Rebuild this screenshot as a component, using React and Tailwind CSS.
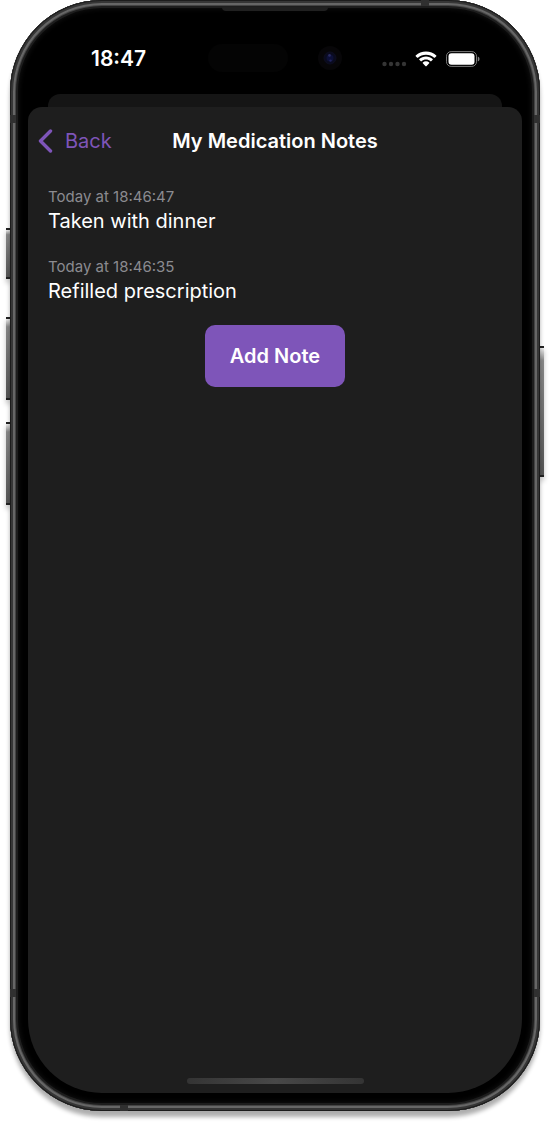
import React, { useState } from 'react';

const StatusBar = () => (
  <div className="relative flex h-[76px] items-center justify-between pl-[63px] pr-[42px] pt-[6px]">
    <span className="text-[21px] font-semibold leading-7 text-white">18:47</span>
    <div className="absolute left-1/2 top-[26px] flex -translate-x-1/2 items-center">
      <span className="h-7 w-20 rounded-full bg-[#040404]" />
      <span className="ml-[30px] flex h-6 w-6 items-center justify-center rounded-full bg-[#070608]">
        <svg viewBox="0 0 14 14" className="h-[14px] w-[14px]">
          <circle cx="7" cy="7" r="6" fill="#0a0b1e" stroke="#0e0e20" />
          <circle cx="7" cy="7" r="3.5" fill="#0d1038" />
          <circle cx="6.5" cy="4.4" r="1.3" fill="#2b2c62" />
          <circle cx="7.5" cy="9.6" r="1.2" fill="#20235c" />
        </svg>
      </span>
    </div>
    <div className="flex items-center">
      <svg viewBox="0 0 26 16" className="h-4 w-[26px]" fill="#353535">
        <circle cx="2.5" cy="13" r="2.2" />
        <circle cx="9" cy="13" r="2.2" />
        <circle cx="15.5" cy="13" r="2.2" />
        <circle cx="22" cy="13" r="2.2" />
      </svg>
      <svg viewBox="0 0 22 16" className="ml-[7px] h-4 w-[22px]" fill="#fff">
        <path d="M11 .5C7 .5 3.4 2 .7 4.500c-.2.2-.2.5 0 .7l1.500 1.500c.2.2.5.2.7 0C5 4.800 7.900 3.700 11 3.700s6 1.100 8.100 3c.2.2.5.2.7 0l1.500-1.500c.2-.2.2-.5 0-.7C18.600 2 15 .5 11 .5z" />
        <path d="M11 5.500c-2.600 0-4.900 1-6.700 2.600-.2.2-.2.5 0 .7l1.500 1.500c.2.2.5.2.7 0 1.200-1.100 2.800-1.700 4.500-1.700s3.300.6 4.500 1.700c.2.200.5.2.7 0l1.500-1.500c.2-.2.2-.5 0-.7C15.900 6.500 13.600 5.500 11 5.500z" />
        <path d="M11 10.300c-1.200 0-2.300.4-3.200 1.200-.2.2-.2.5 0 .7l2.800 3c.2.200.6.2.8 0l2.800-3c.2-.2.2-.5 0-.7-.9-.8-2-1.200-3.200-1.200z" />
      </svg>
      <svg viewBox="0 0 35 16" className="ml-2 h-4 w-[35px]">
        <rect x="1.500" y=".6" width="30" height="14.800" rx="4.600" fill="none" stroke="#7a7a7a" strokeWidth="1" />
        <rect x="3.500" y="2.300" width="26" height="11.400" rx="3" fill="#fff" />
        <path d="M32.800 5.500c1.200.5 1.700 1.400 1.700 2.500s-.5 2-1.700 2.500z" fill="#858585" />
      </svg>
    </div>
  </div>
);

const Note = ({ note }) => (
  <li>
    <time className="block text-[15px] leading-5 text-[#8b8b90]">{note.time}</time>
    <p className="text-[20px] leading-7 text-white">{note.text}</p>
  </li>
);

const NotesScreen = () => {
  const [notes, setNotes] = useState([
    { id: 1, time: 'Today at 18:46:47', text: 'Taken with dinner' },
    { id: 2, time: 'Today at 18:46:35', text: 'Refilled prescription' },
  ]);

  // Newest note goes on top
  const addNote = () => {
    const time = `Today at ${new Date().toLocaleTimeString('en-GB')}`;
    setNotes([{ id: notes.length + 1, time, text: 'New note' }, ...notes]);
  };

  return (
    <main className="flex flex-1 flex-col rounded-b-[74px] rounded-t-[14px] bg-[#1e1e1e]">
      <header className="grid h-[68px] grid-cols-[1fr_auto_1fr] items-center px-[9px]">
        <button type="button" className="flex items-center justify-self-start text-[20px] leading-7 text-[#7e55b9]">
          <svg viewBox="0 0 16 24" className="mr-3 h-6 w-4" fill="none" stroke="currentColor" strokeWidth="3.4" strokeLinecap="round" strokeLinejoin="round">
            <path d="M13.500 2L3.500 12l10 10" />
          </svg>
          Back
        </button>
        <h1 className="text-[20px] font-semibold leading-7 text-white">My Medication Notes</h1>
      </header>
      <ul className="flex flex-col gap-[22px] px-5 pt-3">
        {notes.map(note => (
          <Note key={note.id} note={note} />
        ))}
      </ul>
      <button
        type="button"
        onClick={addNote}
        className="mt-5 h-[62px] self-center rounded-[10px] bg-[#7e55b9] px-[25px] text-[20px] font-semibold leading-7 text-white">
        Add Note
      </button>
      <div className="mb-[9px] mt-auto h-[6px] w-[177px] self-center rounded-full bg-linear-to-r from-[#343434] via-[#484848] to-[#343434]" />
    </main>
  );
};

// Hardware keys on the sides of the phone
const SideKey = ({ className }) => (
  <span className={`absolute w-[4px] border-y-2 border-[#222] bg-linear-to-b from-[#eee] via-[#888] via-10% to-[#555] shadow-[0_4px_5px_rgba(0,0,0,0.25)] ${className}`} />
);

const App = () => {
  return (
    <div className="flex min-h-screen flex-col bg-white px-[10px] pb-[11px] font-['Inter',sans-serif]">
      <div className="relative flex flex-1 flex-col">
        <SideKey className="-left-[4px] top-[228px] h-[51px]" />
        <SideKey className="-left-[4px] top-[317px] h-[83px]" />
        <SideKey className="-left-[4px] top-[422px] h-[83px]" />
        <SideKey className="-right-[4px] top-[346px] h-[131px]" />
        <div className="relative flex flex-1 flex-col rounded-[92px] bg-black p-[18px] shadow-[inset_0_0_0_1px_#1c1c1c,inset_0_0_0_3px_#363636,inset_0_0_0_5px_#666666,inset_0_0_0_6px_#444444,inset_0_0_0_8px_#1d1d1d,inset_0_0_5px_9px_#101010,0_6px_4px_rgba(0,0,0,0.32)]">
          <span className="absolute left-0 top-[115px] h-2 w-[6px] bg-[#303030]" />
          <span className="absolute right-0 top-[115px] h-2 w-[6px] bg-[#303030]" />
          <span className="absolute bottom-[114px] left-0 h-2 w-[6px] bg-[#303030]" />
          <span className="absolute bottom-[114px] right-0 h-2 w-[6px] bg-[#303030]" />
          <span className="absolute right-[111px] top-0 h-[6px] w-2 bg-[#303030]" />
          <span className="absolute bottom-0 left-[110px] h-[6px] w-2 bg-[#303030]" />
          <span className="absolute left-1/2 top-[7px] h-[4px] w-[106px] -translate-x-1/2 rounded-b-sm bg-[#202020]" />
          <StatusBar />
          <div className="mx-5 h-[13px] rounded-t-[12px] bg-[#151515]" />
          <NotesScreen />
        </div>
      </div>
    </div>
  );
};

export default App;
